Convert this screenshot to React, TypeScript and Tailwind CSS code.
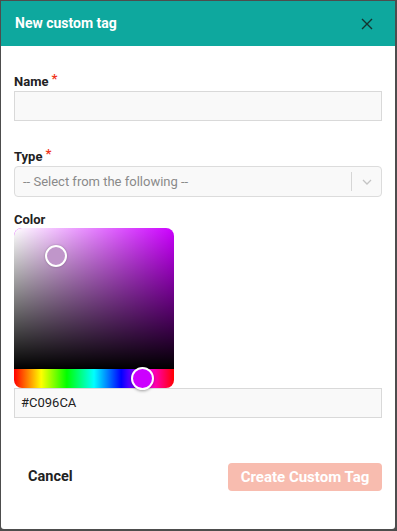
import React from 'react';

function Label({ text, required }: { text: string; required?: boolean }) {
  return (
    <div className="text-[13px] font-bold text-[#222] leading-4">
      {text}
      {required && <span className="text-[#f0361d] ml-[3px] relative -top-[3px]">*</span>}
    </div>
  );
}

export default function App() {
  return (
    <div className="w-[397px] h-[531px] bg-[#4d4d4d] pt-px pl-px pr-[2px] pb-[2px]" style={{ fontFamily: 'Roboto, "Liberation Sans", sans-serif' }}>
      <div className="h-full bg-white rounded-b-[3px] flex flex-col">
        <div className="h-[45px] bg-[#0ea89e] flex items-center justify-between pl-[14px] pr-[22px] shrink-0">
          <span className="text-white font-bold text-[14px]">New custom tag</span>
          <svg width="12" height="12" viewBox="0 0 12 12" stroke="#14332f" strokeWidth="1.4" fill="none">
            <path d="M1 1l10 10M11 1L1 11" />
          </svg>
        </div>
        <div className="px-[13px] pt-[28px] flex flex-col">
          <Label text="Name" required />
          <div className="mt-[1px] h-[30px] bg-[#f9f9f9] border border-[#d9d9d9]" />

          <div className="mt-[28px]"><Label text="Type" required /></div>
          <div className="mt-[1px] h-[31px] bg-[#f9f9f9] border border-[#dcdcdc] rounded-[4px] flex items-center">
            <span className="flex-1 pl-[8px] text-[13px] text-[#8a8a8a]">-- Select from the following --</span>
            <div className="w-px h-[19px] bg-[#d6d6d6]" />
            <div className="w-[29px] flex justify-center">
              <svg width="10" height="6" viewBox="0 0 10 6" fill="none" stroke="#c4c4c4" strokeWidth="1.3">
                <path d="M1 1l4 4 4-4" />
              </svg>
            </div>
          </div>

          <div className="mt-[15px]"><Label text="Color" /></div>
          <div className="w-[160px] relative">
            <div className="h-[141px] rounded-t-[8px] relative overflow-hidden bg-[#cc00ff]">
              <div className="absolute inset-0 bg-gradient-to-r from-white to-transparent" />
              <div className="absolute inset-0 bg-gradient-to-t from-black to-transparent" />
            </div>
            <div
              className="h-[19px] rounded-b-[8px]"
              style={{ background: 'linear-gradient(to right, #f00 0%, #ff0 17%, #0f0 33%, #0ff 50%, #00f 67%, #f0f 83%, #f00 100%)' }}
            />
            <div className="absolute left-[31px] top-[17px] w-[22px] h-[22px] rounded-full border-2 border-white bg-[#c096ca] shadow-[0_0_2px_rgba(0,0,0,0.3)]" />
            <div className="absolute left-[117px] top-[139px] w-[23px] h-[23px] rounded-full border-2 border-white bg-[#cc00ff] shadow-[0_1px_3px_rgba(0,0,0,0.35)]" />
          </div>
          <div className="h-[30px] bg-[#f9f9f9] border border-[#d9d9d9] flex items-center pl-[6px] text-[13px] text-[#222]">#C096CA</div>
        </div>
        <div className="mt-[45px] flex items-center justify-between pl-[27px] pr-[13px]">
          <span className="text-[14.5px] font-bold text-[#222]">Cancel</span>
          <div className="w-[154px] h-[28px] rounded-[4px] bg-[#f8bcaf] flex items-center justify-center text-white font-bold text-[15px]">
            Create Custom Tag
          </div>
        </div>
      </div>
    </div>
  );
}
